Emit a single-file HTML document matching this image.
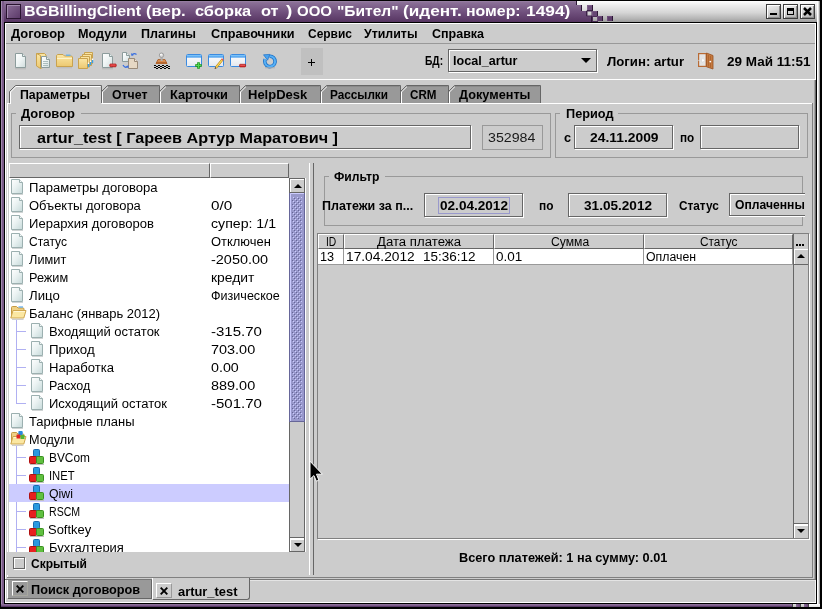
<!DOCTYPE html>
<html><head><meta charset="utf-8"><title>BGBillingClient</title>
<style>
html,body{margin:0;padding:0;}
body{width:822px;height:609px;overflow:hidden;background:#ccc;position:relative;font-family:"Liberation Sans",sans-serif;}
div,span,svg{position:absolute;box-sizing:border-box;}
.t{white-space:pre;transform-origin:0 0;}
.tf{border:1px solid #666;box-shadow:inset 1px 1px 0 #fff, 1px 1px 0 #fff;}
.grp{border:1px solid #999;}
.hd{background:#ccc;border-top:1px solid #fff;border-left:1px solid #fff;border-right:1px solid #666;border-bottom:1px solid #666;}

</style></head><body>
<div style="left:0px;top:0px;width:822px;height:23px;background:#000;"></div>
<div style="left:1px;top:1px;width:560px;height:21px;background:linear-gradient(#9a82a6 0,#8a6f96 8%,#6f4f7c 55%,#573562 100%);"></div>
<div style="left:561px;top:1px;width:256px;height:21px;background:linear-gradient(#ffffff 0,#ededed 20%,#d6d6d6 55%,#b4b4b4 85%,#9c9c9c 100%);"></div>
<svg style="left:560px;top:1px" width="60" height="21" viewBox="0 0 60 21"><defs><linearGradient id="pg" x1="0" y1="0" x2="0" y2="1"><stop offset="0" stop-color="#9a82a6"/><stop offset="0.08" stop-color="#8a6f96"/><stop offset="0.55" stop-color="#6f4f7c"/><stop offset="1" stop-color="#573562"/></linearGradient></defs><path d="M0 0H17V4H22V10H27V15H32V21H0Z" fill="#2d1836"/><path d="M0 0H16V4H21V10H26V15H31V21H0Z" fill="url(#pg)"/><rect x="27" y="4" width="6" height="6" fill="#2d1836"/><rect x="27" y="4" width="5" height="5" fill="#7d5f8a"/><rect x="28" y="5" width="4" height="4" fill="#6d4d7a"/><rect x="27" y="10" width="5" height="5" fill="none" stroke="#4a2d56"/><rect x="32" y="10" width="6" height="6" fill="#2d1836"/><rect x="32" y="10" width="5" height="5" fill="#75567f"/><rect x="33" y="11" width="4" height="4" fill="#654672"/><rect x="32.5" y="15.5" width="5" height="5" fill="none" stroke="#4a2d56"/><rect x="37" y="15" width="6" height="5" fill="#2d1836"/><rect x="37" y="15" width="5" height="5" fill="#6d4d7a"/><rect x="38" y="16" width="4" height="4" fill="#5d3d6a"/><rect x="47" y="15" width="6" height="5" fill="#2d1836"/><rect x="47" y="15" width="5" height="5" fill="#6d4d7a"/><rect x="48" y="16" width="4" height="4" fill="#5d3d6a"/></svg>
<div style="left:6px;top:4px;width:15px;height:15px;background:linear-gradient(135deg,#8a6c96,#5c3a69);border:1px solid #2a1430;box-shadow:inset 1px 1px 0 #a48db0;"></div>
<div style="left:766px;top:4px;width:15px;height:15px;background:linear-gradient(160deg,#f2f2f2 0,#d4d4d4 50%,#a8a8a8 100%);border:1px solid #3c3c3c;box-shadow:inset 1px 1px 0 #fff, inset -1px -1px 0 #8c8c8c;"></div>
<div style="left:783px;top:4px;width:15px;height:15px;background:linear-gradient(160deg,#f2f2f2 0,#d4d4d4 50%,#a8a8a8 100%);border:1px solid #3c3c3c;box-shadow:inset 1px 1px 0 #fff, inset -1px -1px 0 #8c8c8c;"></div>
<div style="left:800px;top:4px;width:15px;height:15px;background:linear-gradient(160deg,#f2f2f2 0,#d4d4d4 50%,#a8a8a8 100%);border:1px solid #3c3c3c;box-shadow:inset 1px 1px 0 #fff, inset -1px -1px 0 #8c8c8c;"></div>
<div style="left:770px;top:13px;width:7px;height:2px;background:#000;"></div>
<div style="left:787px;top:8px;width:7px;height:7px;border:1px solid #000;border-top:3px solid #000;"></div>
<svg style="left:803px;top:7px" width="9" height="9" viewBox="0 0 9 9"><path d="M1 1L8 8M8 1L1 8" stroke="#000" stroke-width="2.5"/></svg>
<div style="left:0px;top:0px;width:1px;height:609px;background:#000;"></div>
<div style="left:1px;top:1px;width:1px;height:606px;background:#a48db0;"></div>
<div style="left:2px;top:1px;width:2px;height:606px;background:#7a5a88;"></div>
<div style="left:4px;top:22px;width:1px;height:582px;background:#000;"></div>
<div style="left:5px;top:23px;width:1px;height:580px;background:#fff;"></div>
<div style="left:815px;top:23px;width:1px;height:57px;background:#fff;"></div>
<div style="left:815px;top:580px;width:1px;height:23px;background:#f0f0f0;"></div>
<div style="left:814px;top:80px;width:1px;height:500px;background:#a4a4a4;"></div>
<div style="left:815px;top:80px;width:1px;height:500px;background:#6a6a6a;"></div>
<div style="left:816px;top:22px;width:1px;height:582px;background:#000;"></div>
<div style="left:817px;top:1px;width:1px;height:606px;background:#fff;"></div>
<div style="left:818px;top:1px;width:1px;height:606px;background:#e0e0e0;"></div>
<div style="left:819px;top:1px;width:1px;height:606px;background:#a0a0a0;"></div>
<div style="left:820px;top:0px;width:2px;height:609px;background:#000;"></div>
<div style="left:5px;top:602px;width:811px;height:1px;background:#fff;"></div>
<div style="left:4px;top:603px;width:813px;height:1px;background:#000;"></div>
<div style="left:1px;top:604px;width:791px;height:1px;background:#8a6c96;"></div>
<div style="left:1px;top:605px;width:791px;height:1px;background:#7a5a88;"></div>
<div style="left:1px;top:606px;width:791px;height:1px;background:#5a3a68;"></div>
<div style="left:0px;top:607px;width:822px;height:2px;background:#000;"></div>
<div style="left:792px;top:604px;width:17px;height:3px;background:linear-gradient(#e4e4e4,#b8b8b8);"></div>
<div style="left:809px;top:604px;width:11px;height:3px;background:linear-gradient(#fff,#e0e0e0);"></div>
<div style="left:796px;top:604px;width:4px;height:3px;background:linear-gradient(90deg,#8a6c96,#6a4a78);"></div>
<div style="left:804px;top:604px;width:4px;height:3px;background:linear-gradient(90deg,#8a6c96,#6a4a78);"></div>
<div style="left:792px;top:604px;width:1px;height:3px;background:#444;"></div>
<div style="left:800px;top:604px;width:1px;height:3px;background:#444;"></div>
<div style="left:808px;top:604px;width:1px;height:3px;background:#444;"></div>
<div style="left:5px;top:23px;width:811px;height:1px;background:#fff;"></div>
<div style="left:6px;top:43px;width:809px;height:1px;background:#999;"></div>
<div style="left:6px;top:79px;width:809px;height:1px;background:#fff;"></div>
<div style="left:301px;top:48px;width:22px;height:27px;background:#c0c0c0;"></div>
<div style="left:308px;top:62px;width:7px;height:1px;background:#000;"></div>
<div style="left:311px;top:59px;width:1px;height:7px;background:#000;"></div>
<div style="left:448px;top:49px;width:149px;height:23px;border:1px solid #666;box-shadow:inset 1px 1px 0 #fff, 1px 1px 0 #fff;"></div>
<svg style="left:581px;top:58px" width="10" height="5" viewBox="0 0 10 5"><path d="M0 0H10L5 5Z" fill="#000"/></svg>
<div style="left:7px;top:103px;width:806px;height:1px;background:#fff;"></div>
<div style="left:7px;top:103px;width:1px;height:475px;background:#fff;"></div>
<div style="left:812px;top:103px;width:1px;height:475px;background:#808080;"></div>
<div style="left:7px;top:577px;width:806px;height:1px;background:#808080;"></div>
<svg style="left:448px;top:85px" width="93" height="18" viewBox="0 0 93 18"><path d="M0.5 18 V6.5 L6.5 0.5 H92.5 V18 Z" fill="#999" stroke="none"/><path d="M0.5 18 V6.5 L6.5 0.5 H92.5 V18" fill="none" stroke="#666" stroke-width="1"/><path d="M1.5 18 V7 L7 1.5" fill="none" stroke="#fff" stroke-width="1"/><path d="M7 1.5 H91.5" fill="none" stroke="#8a8a8a" stroke-width="1"/></svg>
<svg style="left:400px;top:85px" width="49" height="18" viewBox="0 0 49 18"><path d="M0.5 18 V6.5 L6.5 0.5 H48.5 V18 Z" fill="#999" stroke="none"/><path d="M0.5 18 V6.5 L6.5 0.5 H48.5 V18" fill="none" stroke="#666" stroke-width="1"/><path d="M1.5 18 V7 L7 1.5" fill="none" stroke="#fff" stroke-width="1"/><path d="M7 1.5 H47.5" fill="none" stroke="#8a8a8a" stroke-width="1"/></svg>
<svg style="left:320px;top:85px" width="81" height="18" viewBox="0 0 81 18"><path d="M0.5 18 V6.5 L6.5 0.5 H80.5 V18 Z" fill="#999" stroke="none"/><path d="M0.5 18 V6.5 L6.5 0.5 H80.5 V18" fill="none" stroke="#666" stroke-width="1"/><path d="M1.5 18 V7 L7 1.5" fill="none" stroke="#fff" stroke-width="1"/><path d="M7 1.5 H79.5" fill="none" stroke="#8a8a8a" stroke-width="1"/></svg>
<svg style="left:239px;top:85px" width="82" height="18" viewBox="0 0 82 18"><path d="M0.5 18 V6.5 L6.5 0.5 H81.5 V18 Z" fill="#999" stroke="none"/><path d="M0.5 18 V6.5 L6.5 0.5 H81.5 V18" fill="none" stroke="#666" stroke-width="1"/><path d="M1.5 18 V7 L7 1.5" fill="none" stroke="#fff" stroke-width="1"/><path d="M7 1.5 H80.5" fill="none" stroke="#8a8a8a" stroke-width="1"/></svg>
<svg style="left:159px;top:85px" width="81" height="18" viewBox="0 0 81 18"><path d="M0.5 18 V6.5 L6.5 0.5 H80.5 V18 Z" fill="#999" stroke="none"/><path d="M0.5 18 V6.5 L6.5 0.5 H80.5 V18" fill="none" stroke="#666" stroke-width="1"/><path d="M1.5 18 V7 L7 1.5" fill="none" stroke="#fff" stroke-width="1"/><path d="M7 1.5 H79.5" fill="none" stroke="#8a8a8a" stroke-width="1"/></svg>
<svg style="left:101px;top:85px" width="59" height="18" viewBox="0 0 59 18"><path d="M0.5 18 V6.5 L6.5 0.5 H58.5 V18 Z" fill="#999" stroke="none"/><path d="M0.5 18 V6.5 L6.5 0.5 H58.5 V18" fill="none" stroke="#666" stroke-width="1"/><path d="M1.5 18 V7 L7 1.5" fill="none" stroke="#fff" stroke-width="1"/><path d="M7 1.5 H57.5" fill="none" stroke="#8a8a8a" stroke-width="1"/></svg>
<svg style="left:9px;top:85px" width="93" height="19" viewBox="0 0 93 19"><path d="M0.5 19 V6.5 L6.5 0.5 H92.5 V19 Z" fill="#ccc" stroke="none"/><path d="M0.5 18 V6.5 L6.5 0.5 H92.5 V18" fill="none" stroke="#666" stroke-width="1"/><path d="M1.5 19 V7 L7 1.5" fill="none" stroke="#fff" stroke-width="1"/><path d="M7 1.5 H91.5" fill="none" stroke="#fff" stroke-width="1"/></svg>
<div class="grp" style="left:11px;top:113px;width:540px;height:45px;"></div>
<div style="left:16px;top:106px;width:65px;height:14px;background:#ccc;"></div>
<div class="tf" style="left:19px;top:125px;width:452px;height:24px;"></div>
<div style="left:482px;top:125px;width:61px;height:25px;border:1px solid #999;"></div>
<div class="grp" style="left:555px;top:113px;width:253px;height:45px;"></div>
<div style="left:560px;top:106px;width:58px;height:14px;background:#ccc;"></div>
<div class="tf" style="left:574px;top:125px;width:99px;height:24px;"></div>
<div class="tf" style="left:700px;top:125px;width:99px;height:24px;"></div>
<div style="left:309px;top:163px;width:1px;height:412px;background:#fff;"></div>
<div style="left:313px;top:163px;width:1px;height:412px;background:#666;"></div>
<div class="hd" style="left:9px;top:163px;width:201px;height:15px;"></div>
<div class="hd" style="left:210px;top:163px;width:79px;height:15px;"></div>
<div style="left:9px;top:178px;width:280px;height:374px;background:#fff;"></div>
<div style="left:289px;top:178px;width:16px;height:374px;background:#ccc;border:1px solid #666;"></div>
<div style="left:305px;top:178px;width:1px;height:374px;background:#fff;"></div>
<div style="left:290px;top:179px;width:14px;height:14px;background:#ccc;border-bottom:1px solid #666;box-shadow:inset 1px 1px 0 #fff;"></div>
<svg style="left:294px;top:184px" width="8" height="4" viewBox="0 0 8 4"><path d="M0 4H8L4 0Z" fill="#000"/></svg>
<div style="left:290px;top:537px;width:14px;height:14px;background:#ccc;border-top:1px solid #666;box-shadow:inset 1px 2px 0 #fff;"></div>
<svg style="left:294px;top:543px" width="8" height="4" viewBox="0 0 8 4"><path d="M0 0H8L4 4Z" fill="#000"/></svg>
<svg style="left:289px;top:193px" width="16" height="229" viewBox="0 0 16 229"><defs><pattern id="bm" width="4" height="4" patternUnits="userSpaceOnUse"><rect width="4" height="4" fill="#9999cc"/><rect x="0" y="0" width="1" height="1" fill="#ccccff"/><rect x="1" y="1" width="1" height="1" fill="#666699"/><rect x="2" y="2" width="1" height="1" fill="#ccccff"/><rect x="3" y="3" width="1" height="1" fill="#666699"/></pattern></defs><rect width="16" height="229" fill="#9999cc"/><rect x="3" y="4" width="10" height="222" fill="url(#bm)"/><path d="M1.5 228V0.5H15" stroke="#ccccff" fill="none"/><path d="M0 228.5H16M15.5 0V229M0.5 0V229" stroke="#666699" fill="none"/></svg>
<div style="left:16px;top:320px;width:1px;height:84px;background:#b0b0f2;"></div>
<div style="left:16px;top:331px;width:10px;height:1px;background:#b0b0f2;"></div>
<div style="left:16px;top:349px;width:10px;height:1px;background:#b0b0f2;"></div>
<div style="left:16px;top:367px;width:10px;height:1px;background:#b0b0f2;"></div>
<div style="left:16px;top:385px;width:10px;height:1px;background:#b0b0f2;"></div>
<div style="left:16px;top:403px;width:10px;height:1px;background:#b0b0f2;"></div>
<div style="left:16px;top:446px;width:1px;height:106px;background:#b0b0f2;"></div>
<div style="left:16px;top:457px;width:10px;height:1px;background:#b0b0f2;"></div>
<div style="left:16px;top:475px;width:10px;height:1px;background:#b0b0f2;"></div>
<div style="left:16px;top:511px;width:10px;height:1px;background:#b0b0f2;"></div>
<div style="left:16px;top:529px;width:10px;height:1px;background:#b0b0f2;"></div>
<div style="left:16px;top:547px;width:10px;height:1px;background:#b0b0f2;"></div>
<div style="left:9px;top:484px;width:280px;height:18px;background:#ccccff;"></div>
<svg style="left:11px;top:179px" width="13" height="17" viewBox="0 0 13 17"><defs><linearGradient id="dg1" x1="0" y1="0" x2="1" y2="1"><stop offset="0" stop-color="#ffffff"/><stop offset="0.45" stop-color="#eaf2f2"/><stop offset="1" stop-color="#c6d9d9"/></linearGradient></defs><path d="M0.5 0.5H8.5L11.5 3.5V14.5H0.5Z" fill="url(#dg1)" stroke="#9cb0b0" stroke-width="1"/><path d="M8.5 0.5V3.5H11.5" fill="#f4f8f8" stroke="#9cb0b0" stroke-width="1"/><path d="M1 15.5H12" stroke="#d0d4d4" stroke-width="1"/></svg>
<svg style="left:11px;top:197px" width="13" height="17" viewBox="0 0 13 17"><defs><linearGradient id="dg2" x1="0" y1="0" x2="1" y2="1"><stop offset="0" stop-color="#ffffff"/><stop offset="0.45" stop-color="#eaf2f2"/><stop offset="1" stop-color="#c6d9d9"/></linearGradient></defs><path d="M0.5 0.5H8.5L11.5 3.5V14.5H0.5Z" fill="url(#dg2)" stroke="#9cb0b0" stroke-width="1"/><path d="M8.5 0.5V3.5H11.5" fill="#f4f8f8" stroke="#9cb0b0" stroke-width="1"/><path d="M1 15.5H12" stroke="#d0d4d4" stroke-width="1"/></svg>
<svg style="left:11px;top:215px" width="13" height="17" viewBox="0 0 13 17"><defs><linearGradient id="dg3" x1="0" y1="0" x2="1" y2="1"><stop offset="0" stop-color="#ffffff"/><stop offset="0.45" stop-color="#eaf2f2"/><stop offset="1" stop-color="#c6d9d9"/></linearGradient></defs><path d="M0.5 0.5H8.5L11.5 3.5V14.5H0.5Z" fill="url(#dg3)" stroke="#9cb0b0" stroke-width="1"/><path d="M8.5 0.5V3.5H11.5" fill="#f4f8f8" stroke="#9cb0b0" stroke-width="1"/><path d="M1 15.5H12" stroke="#d0d4d4" stroke-width="1"/></svg>
<svg style="left:11px;top:233px" width="13" height="17" viewBox="0 0 13 17"><defs><linearGradient id="dg4" x1="0" y1="0" x2="1" y2="1"><stop offset="0" stop-color="#ffffff"/><stop offset="0.45" stop-color="#eaf2f2"/><stop offset="1" stop-color="#c6d9d9"/></linearGradient></defs><path d="M0.5 0.5H8.5L11.5 3.5V14.5H0.5Z" fill="url(#dg4)" stroke="#9cb0b0" stroke-width="1"/><path d="M8.5 0.5V3.5H11.5" fill="#f4f8f8" stroke="#9cb0b0" stroke-width="1"/><path d="M1 15.5H12" stroke="#d0d4d4" stroke-width="1"/></svg>
<svg style="left:11px;top:251px" width="13" height="17" viewBox="0 0 13 17"><defs><linearGradient id="dg5" x1="0" y1="0" x2="1" y2="1"><stop offset="0" stop-color="#ffffff"/><stop offset="0.45" stop-color="#eaf2f2"/><stop offset="1" stop-color="#c6d9d9"/></linearGradient></defs><path d="M0.5 0.5H8.5L11.5 3.5V14.5H0.5Z" fill="url(#dg5)" stroke="#9cb0b0" stroke-width="1"/><path d="M8.5 0.5V3.5H11.5" fill="#f4f8f8" stroke="#9cb0b0" stroke-width="1"/><path d="M1 15.5H12" stroke="#d0d4d4" stroke-width="1"/></svg>
<svg style="left:11px;top:269px" width="13" height="17" viewBox="0 0 13 17"><defs><linearGradient id="dg6" x1="0" y1="0" x2="1" y2="1"><stop offset="0" stop-color="#ffffff"/><stop offset="0.45" stop-color="#eaf2f2"/><stop offset="1" stop-color="#c6d9d9"/></linearGradient></defs><path d="M0.5 0.5H8.5L11.5 3.5V14.5H0.5Z" fill="url(#dg6)" stroke="#9cb0b0" stroke-width="1"/><path d="M8.5 0.5V3.5H11.5" fill="#f4f8f8" stroke="#9cb0b0" stroke-width="1"/><path d="M1 15.5H12" stroke="#d0d4d4" stroke-width="1"/></svg>
<svg style="left:11px;top:287px" width="13" height="17" viewBox="0 0 13 17"><defs><linearGradient id="dg7" x1="0" y1="0" x2="1" y2="1"><stop offset="0" stop-color="#ffffff"/><stop offset="0.45" stop-color="#eaf2f2"/><stop offset="1" stop-color="#c6d9d9"/></linearGradient></defs><path d="M0.5 0.5H8.5L11.5 3.5V14.5H0.5Z" fill="url(#dg7)" stroke="#9cb0b0" stroke-width="1"/><path d="M8.5 0.5V3.5H11.5" fill="#f4f8f8" stroke="#9cb0b0" stroke-width="1"/><path d="M1 15.5H12" stroke="#d0d4d4" stroke-width="1"/></svg>
<svg style="left:10px;top:305px" width="17" height="15" viewBox="0 0 17 15"><path d="M1.5 12.5V2.5Q1.5 1.5 2.5 1.5H6.5L8 3H13Q14 3 14 4V6" fill="#efd084" stroke="#c49a44" stroke-width="1"/><path d="M8.5 2H13" stroke="#58a8ec" stroke-width="1.2"/><path d="M0.8 13L3 5.5H16L13.8 13Z" fill="#fbe7a2" stroke="#cfa64e" stroke-width="1"/><path d="M3.6 6.5H15" stroke="#fff6d4" stroke-width="1"/><path d="M2 14.3H13.5" stroke="#c4c4c4"/></svg>
<svg style="left:31px;top:323px" width="13" height="17" viewBox="0 0 13 17"><defs><linearGradient id="dg8" x1="0" y1="0" x2="1" y2="1"><stop offset="0" stop-color="#ffffff"/><stop offset="0.45" stop-color="#eaf2f2"/><stop offset="1" stop-color="#c6d9d9"/></linearGradient></defs><path d="M0.5 0.5H8.5L11.5 3.5V14.5H0.5Z" fill="url(#dg8)" stroke="#9cb0b0" stroke-width="1"/><path d="M8.5 0.5V3.5H11.5" fill="#f4f8f8" stroke="#9cb0b0" stroke-width="1"/><path d="M1 15.5H12" stroke="#d0d4d4" stroke-width="1"/></svg>
<svg style="left:31px;top:341px" width="13" height="17" viewBox="0 0 13 17"><defs><linearGradient id="dg9" x1="0" y1="0" x2="1" y2="1"><stop offset="0" stop-color="#ffffff"/><stop offset="0.45" stop-color="#eaf2f2"/><stop offset="1" stop-color="#c6d9d9"/></linearGradient></defs><path d="M0.5 0.5H8.5L11.5 3.5V14.5H0.5Z" fill="url(#dg9)" stroke="#9cb0b0" stroke-width="1"/><path d="M8.5 0.5V3.5H11.5" fill="#f4f8f8" stroke="#9cb0b0" stroke-width="1"/><path d="M1 15.5H12" stroke="#d0d4d4" stroke-width="1"/></svg>
<svg style="left:31px;top:359px" width="13" height="17" viewBox="0 0 13 17"><defs><linearGradient id="dg10" x1="0" y1="0" x2="1" y2="1"><stop offset="0" stop-color="#ffffff"/><stop offset="0.45" stop-color="#eaf2f2"/><stop offset="1" stop-color="#c6d9d9"/></linearGradient></defs><path d="M0.5 0.5H8.5L11.5 3.5V14.5H0.5Z" fill="url(#dg10)" stroke="#9cb0b0" stroke-width="1"/><path d="M8.5 0.5V3.5H11.5" fill="#f4f8f8" stroke="#9cb0b0" stroke-width="1"/><path d="M1 15.5H12" stroke="#d0d4d4" stroke-width="1"/></svg>
<svg style="left:31px;top:377px" width="13" height="17" viewBox="0 0 13 17"><defs><linearGradient id="dg11" x1="0" y1="0" x2="1" y2="1"><stop offset="0" stop-color="#ffffff"/><stop offset="0.45" stop-color="#eaf2f2"/><stop offset="1" stop-color="#c6d9d9"/></linearGradient></defs><path d="M0.5 0.5H8.5L11.5 3.5V14.5H0.5Z" fill="url(#dg11)" stroke="#9cb0b0" stroke-width="1"/><path d="M8.5 0.5V3.5H11.5" fill="#f4f8f8" stroke="#9cb0b0" stroke-width="1"/><path d="M1 15.5H12" stroke="#d0d4d4" stroke-width="1"/></svg>
<svg style="left:31px;top:395px" width="13" height="17" viewBox="0 0 13 17"><defs><linearGradient id="dg12" x1="0" y1="0" x2="1" y2="1"><stop offset="0" stop-color="#ffffff"/><stop offset="0.45" stop-color="#eaf2f2"/><stop offset="1" stop-color="#c6d9d9"/></linearGradient></defs><path d="M0.5 0.5H8.5L11.5 3.5V14.5H0.5Z" fill="url(#dg12)" stroke="#9cb0b0" stroke-width="1"/><path d="M8.5 0.5V3.5H11.5" fill="#f4f8f8" stroke="#9cb0b0" stroke-width="1"/><path d="M1 15.5H12" stroke="#d0d4d4" stroke-width="1"/></svg>
<svg style="left:11px;top:413px" width="13" height="17" viewBox="0 0 13 17"><defs><linearGradient id="dg13" x1="0" y1="0" x2="1" y2="1"><stop offset="0" stop-color="#ffffff"/><stop offset="0.45" stop-color="#eaf2f2"/><stop offset="1" stop-color="#c6d9d9"/></linearGradient></defs><path d="M0.5 0.5H8.5L11.5 3.5V14.5H0.5Z" fill="url(#dg13)" stroke="#9cb0b0" stroke-width="1"/><path d="M8.5 0.5V3.5H11.5" fill="#f4f8f8" stroke="#9cb0b0" stroke-width="1"/><path d="M1 15.5H12" stroke="#d0d4d4" stroke-width="1"/></svg>
<svg style="left:10px;top:431px" width="17" height="15" viewBox="0 0 17 15"><path d="M1.5 12.5V2.5Q1.5 1.5 2.5 1.5H6.5L8 3H13Q14 3 14 4V6" fill="#efd084" stroke="#c49a44" stroke-width="1"/><path d="M8.5 2H13" stroke="#58a8ec" stroke-width="1.2"/><path d="M0.8 13L3 5.5H16L13.8 13Z" fill="#fbe7a2" stroke="#cfa64e" stroke-width="1"/><path d="M3.6 6.5H15" stroke="#fff6d4" stroke-width="1"/><path d="M2 14.3H13.5" stroke="#c4c4c4"/><rect x="8.5" y="0" width="4" height="4.5" rx="0.6" fill="#2a8ade"/><rect x="6.5" y="3.5" width="4" height="4" rx="0.6" fill="#e02424"/><rect x="10.5" y="4" width="4" height="4" rx="0.6" fill="#54b434"/></svg>
<svg style="left:29px;top:449px" width="16" height="16" viewBox="0 0 16 16"><rect x="4.5" y="0.5" width="6" height="7" rx="1" fill="#2a9ae0" stroke="#1a6ab0"/><rect x="0.5" y="7.5" width="7" height="7" rx="1" fill="#e82020" stroke="#b01010"/><rect x="7.5" y="7.5" width="7" height="7" rx="1" fill="#60c040" stroke="#3a9020"/><path d="M1 15.5H15" stroke="#c0c0c0"/></svg>
<svg style="left:29px;top:467px" width="16" height="16" viewBox="0 0 16 16"><rect x="4.5" y="0.5" width="6" height="7" rx="1" fill="#2a9ae0" stroke="#1a6ab0"/><rect x="0.5" y="7.5" width="7" height="7" rx="1" fill="#e82020" stroke="#b01010"/><rect x="7.5" y="7.5" width="7" height="7" rx="1" fill="#60c040" stroke="#3a9020"/><path d="M1 15.5H15" stroke="#c0c0c0"/></svg>
<svg style="left:29px;top:485px" width="16" height="16" viewBox="0 0 16 16"><rect x="4.5" y="0.5" width="6" height="7" rx="1" fill="#2a9ae0" stroke="#1a6ab0"/><rect x="0.5" y="7.5" width="7" height="7" rx="1" fill="#e82020" stroke="#b01010"/><rect x="7.5" y="7.5" width="7" height="7" rx="1" fill="#60c040" stroke="#3a9020"/><path d="M1 15.5H15" stroke="#c0c0c0"/></svg>
<svg style="left:29px;top:503px" width="16" height="16" viewBox="0 0 16 16"><rect x="4.5" y="0.5" width="6" height="7" rx="1" fill="#2a9ae0" stroke="#1a6ab0"/><rect x="0.5" y="7.5" width="7" height="7" rx="1" fill="#e82020" stroke="#b01010"/><rect x="7.5" y="7.5" width="7" height="7" rx="1" fill="#60c040" stroke="#3a9020"/><path d="M1 15.5H15" stroke="#c0c0c0"/></svg>
<svg style="left:29px;top:521px" width="16" height="16" viewBox="0 0 16 16"><rect x="4.5" y="0.5" width="6" height="7" rx="1" fill="#2a9ae0" stroke="#1a6ab0"/><rect x="0.5" y="7.5" width="7" height="7" rx="1" fill="#e82020" stroke="#b01010"/><rect x="7.5" y="7.5" width="7" height="7" rx="1" fill="#60c040" stroke="#3a9020"/><path d="M1 15.5H15" stroke="#c0c0c0"/></svg>
<svg style="left:29px;top:539px" width="16" height="16" viewBox="0 0 16 16"><rect x="4.5" y="0.5" width="6" height="7" rx="1" fill="#2a9ae0" stroke="#1a6ab0"/><rect x="0.5" y="7.5" width="7" height="7" rx="1" fill="#e82020" stroke="#b01010"/><rect x="7.5" y="7.5" width="7" height="7" rx="1" fill="#60c040" stroke="#3a9020"/><path d="M1 15.5H15" stroke="#c0c0c0"/></svg>
<div style="left:6px;top:552px;width:303px;height:23px;background:#ccc;"></div>
<div style="left:9px;top:552px;width:297px;height:1px;background:#ccc;"></div>
<div style="left:13px;top:557px;width:12px;height:12px;border:1px solid #666;box-shadow:inset 1px 1px 0 #fff, 1px 1px 0 #fff;"></div>
<div class="grp" style="left:324px;top:176px;width:479px;height:50px;"></div>
<div style="left:329px;top:170px;width:56px;height:14px;background:#ccc;"></div>
<div style="left:318px;top:190px;width:10px;height:30px;background:#ccc;"></div>
<div style="left:324px;top:190px;width:1px;height:30px;background:#999;"></div>
<div class="tf" style="left:424px;top:193px;width:99px;height:24px;"></div>
<div style="left:438px;top:197px;width:72px;height:17px;border:1px solid #9999cc;"></div>
<div class="tf" style="left:568px;top:193px;width:99px;height:24px;"></div>
<div style="left:729px;top:193px;width:76px;height:23px;background:#ccc;border:1px solid #666;border-right:none;box-shadow:inset 1px 1px 0 #fff, 0 1px 0 #fff;overflow:hidden;"></div>
<div style="left:317px;top:233px;width:492px;height:306px;border:1px solid #808080;box-shadow:1px 1px 0 #fff;"></div>
<div class="hd" style="left:318px;top:234px;width:26px;height:15px;"></div>
<div class="hd" style="left:344px;top:234px;width:150px;height:15px;"></div>
<div class="hd" style="left:494px;top:234px;width:150px;height:15px;"></div>
<div class="hd" style="left:644px;top:234px;width:149px;height:15px;"></div>
<div style="left:793px;top:234px;width:1px;height:15px;background:#666;"></div>
<div style="left:796px;top:244px;width:2px;height:2px;background:#000;"></div>
<div style="left:799px;top:244px;width:2px;height:2px;background:#000;"></div>
<div style="left:802px;top:244px;width:2px;height:2px;background:#000;"></div>
<div style="left:318px;top:249px;width:475px;height:15px;background:#fff;"></div>
<div style="left:343px;top:249px;width:1px;height:16px;background:#999;"></div>
<div style="left:493px;top:249px;width:1px;height:16px;background:#999;"></div>
<div style="left:643px;top:249px;width:1px;height:16px;background:#999;"></div>
<div style="left:318px;top:264px;width:475px;height:1px;background:#999;"></div>
<div style="left:792px;top:249px;width:1px;height:16px;background:#999;"></div>
<div style="left:793px;top:249px;width:15px;height:289px;background:#ccc;border-left:1px solid #666;"></div>
<div style="left:794px;top:249px;width:14px;height:16px;background:#ccc;border-bottom:1px solid #666;box-shadow:inset 1px 1px 0 #fff;"></div>
<svg style="left:797px;top:254px" width="8" height="4" viewBox="0 0 8 4"><path d="M0 4H8L4 0Z" fill="#000"/></svg>
<div style="left:794px;top:523px;width:14px;height:15px;background:#ccc;border-top:1px solid #666;box-shadow:inset 1px 2px 0 #fff;"></div>
<svg style="left:797px;top:529px" width="8" height="4" viewBox="0 0 8 4"><path d="M0 0H8L4 4Z" fill="#000"/></svg>
<div style="left:5px;top:579px;width:147px;height:1px;background:#777;"></div>
<div style="left:249px;top:579px;width:566px;height:1px;background:#777;"></div>
<div style="left:250px;top:580px;width:565px;height:1px;background:#e4e4e4;"></div>
<div style="left:7px;top:580px;width:1px;height:18px;background:#fff;"></div>
<div style="left:8px;top:580px;width:143px;height:18px;background:#999;"></div>
<div style="left:8px;top:598px;width:143px;height:1px;background:#666;"></div>
<div style="left:151px;top:580px;width:1px;height:19px;background:#666;"></div>
<div style="left:12px;top:581px;width:16px;height:15px;background:#999;border-top:1px solid #fff;border-left:1px solid #fff;border-right:1px solid #a8a8a0;border-bottom:1px solid #a8a8a0;"></div>
<svg style="left:16px;top:585px" width="8" height="8" viewBox="0 0 8 8"><path d="M0.7 0.7L7.3 7.3M7.3 0.7L0.7 7.3" stroke="#000" stroke-width="1.9"/></svg>
<div style="left:152px;top:578px;width:98px;height:22px;background:#ccc;border-left:1px solid #fff;border-right:1px solid #666;border-bottom:1px solid #666;border-radius:0 0 3px 0;"></div>
<div style="left:156px;top:583px;width:16px;height:15px;background:#ccc;border-top:1px solid #fff;border-left:1px solid #fff;border-right:1px solid #999;border-bottom:1px solid #999;"></div>
<svg style="left:160px;top:587px" width="8" height="8" viewBox="0 0 8 8"><path d="M0.7 0.7L7.3 7.3M7.3 0.7L0.7 7.3" stroke="#000" stroke-width="1.9"/></svg>
<svg style="left:309px;top:460px" width="15" height="23" viewBox="0 0 15 23"><path d="M1 1.2V19.2L4.9 15.6L7.4 21.2L9.9 20.2L7.5 14.2H13.4Z" fill="#000" stroke="#fff" stroke-width="1" stroke-linejoin="miter"/></svg>
<svg style="left:0px;top:0px" width="1" height="1" viewBox="0 0 1 1"><defs><linearGradient id="pgd" x1="0" y1="0" x2="1" y2="1"><stop offset="0" stop-color="#fff"/><stop offset="0.5" stop-color="#eef4f4"/><stop offset="1" stop-color="#cfdcdc"/></linearGradient><linearGradient id="fgd" x1="0" y1="0" x2="0" y2="1"><stop offset="0" stop-color="#fbe7a6"/><stop offset="1" stop-color="#ecc870"/></linearGradient><linearGradient id="wgd" x1="0" y1="0" x2="0" y2="1"><stop offset="0" stop-color="#fff"/><stop offset="1" stop-color="#e4e8ee"/></linearGradient><linearGradient id="bgd" x1="0" y1="0" x2="0" y2="1"><stop offset="0" stop-color="#8accfa"/><stop offset="1" stop-color="#3a94ea"/></linearGradient></defs></svg>
<svg style="left:14px;top:52px" width="13" height="18" viewBox="0 0 13 18"><path d="M1.5 1.5H8.5L11.5 4.5V15.5H1.5Z" fill="url(#pgd)" stroke="#8c9c9c"/><path d="M8.5 1.5V4.5H11.5" fill="#e6eeee" stroke="#8c9c9c"/><path d="M1 16.8H12" stroke="#b4b4b4"/></svg>
<svg style="left:35px;top:52px" width="17" height="18" viewBox="0 0 17 18"><path d="M1.5 1.5H9.5L11 3V14L5.5 16.5L1.5 14Z" fill="url(#fgd)" stroke="#c9a24e"/><path d="M1.5 1.5L5.5 3.5V16.5" fill="none" stroke="#c9a24e"/><path d="M6.5 4.5H11.5L14.5 7.5V15.5H6.5Z" fill="url(#pgd)" stroke="#8c9c9c"/><path d="M11.5 4.5V7.5H14.5" fill="#e6eeee" stroke="#8c9c9c"/><path d="M8 9.5H13M8 11.5H13M8 13.5H13" stroke="#9ab0b0" stroke-width="0.8"/></svg>
<svg style="left:55px;top:53px" width="19" height="16" viewBox="0 0 19 16"><path d="M1.5 13.5V3Q1.5 2 2.5 1.5H8L9.5 3H16Q17 3 17.5 4V13.5Z" fill="url(#fgd)" stroke="#c9a24e"/><path d="M11 2.2H15.5" stroke="#5ab0ee" stroke-width="1.2"/><path d="M2 5.5H17" stroke="#fdf3cc"/><path d="M2 14.8H17" stroke="#b8b8b8"/></svg>
<svg style="left:78px;top:52px" width="17" height="18" viewBox="0 0 17 18"><path d="M6.5 0.5H14.5V11.5H6.5Z" fill="url(#fgd)" stroke="#c9a24e"/><path d="M4.5 2.5H13.5V13.5H4.5Z" fill="url(#fgd)" stroke="#c9a24e"/><path d="M2.5 4.5H11.5V15H2.5Z" fill="url(#fgd)" stroke="#c9a24e"/><path d="M0.5 6.5H9.5V16.5H0.5Z" fill="url(#fgd)" stroke="#c9a24e"/><path d="M10.5 12V15M12.5 10V13M14.5 8V11" stroke="#3aa0e8" stroke-width="1.4"/><path d="M10.5 10.5V12M12.5 8.5V10M14.5 6.5V8" stroke="#fff" stroke-width="1.4"/></svg>
<svg style="left:101px;top:52px" width="16" height="18" viewBox="0 0 16 18"><path d="M1.5 1.5H8.5L11.5 4.5V15.5H1.5Z" fill="url(#pgd)" stroke="#8c9c9c"/><path d="M8.5 1.5V4.5H11.5" fill="#e6eeee" stroke="#8c9c9c"/><path d="M1 16.8H12" stroke="#b4b4b4"/><rect x="8.8" y="12" width="6.4" height="2.8" rx="0.8" fill="#e03030" stroke="#a01010" stroke-width="0.7"/><path d="M9.5 13H14.5" stroke="#f08080" stroke-width="0.6"/></svg>
<svg style="left:121px;top:51px" width="18" height="19" viewBox="0 0 18 19"><path d="M1.5 1.5H5.5L8.5 4.5V10.5H1.5Z" fill="url(#pgd)" stroke="#8c9c9c"/><path d="M5.5 1.5V4.5H8.5" fill="#e6eeee" stroke="#8c9c9c"/><path d="M7.5 7.5H13.5L16.5 10.5V17.5H7.5Z" fill="#e6d8c4" stroke="#9a8a78"/><path d="M13.5 7.5V10.5H16.5" fill="#f2e8da" stroke="#9a8a78"/><path d="M11 4Q13 1.5 15.5 3.5" fill="none" stroke="#3a70e0" stroke-width="1.3"/><path d="M10 2L10.5 5L13 4Z" fill="#3a70e0"/><path d="M2 14Q4 17.5 6.5 15.5" fill="none" stroke="#3a70e0" stroke-width="1.3"/><path d="M7.5 17.5L7.5 14.2L5 15.2Z" fill="#3a70e0"/></svg>
<svg style="left:153px;top:52px" width="18" height="18" viewBox="0 0 18 18"><rect x="7.6" y="4" width="2" height="4.5" fill="#b0b0b0"/><circle cx="8.5" cy="3.2" r="2.2" fill="#d8d8d8" stroke="#909090" stroke-width="0.8"/><circle cx="8" cy="2.6" r="0.9" fill="#fff"/><path d="M3 11.5L5 7.5H12L14 11.5Z" fill="#d88c50" stroke="#a45a24" stroke-width="0.8"/><rect x="7.6" y="6" width="2" height="3" fill="#b0b0b0"/><path d="M3 10.8H14" stroke="#b4642c" stroke-width="1.4"/><path d="M1 13.5H17" stroke="#000" stroke-width="1" stroke-dasharray="2 2"/><path d="M3 14.5H17" stroke="#000" stroke-width="1" stroke-dasharray="2 2"/><path d="M1 15.5H17" stroke="#000" stroke-width="1" stroke-dasharray="2 2"/><path d="M3 16.5H17" stroke="#000" stroke-width="1" stroke-dasharray="2 2"/></svg>
<svg style="left:186px;top:54px" width="18" height="15" viewBox="0 0 18 15"><rect x="0.5" y="0.5" width="15" height="12" rx="1" fill="url(#wgd)" stroke="#3a8ae0"/><rect x="1" y="1" width="14" height="2.6" fill="url(#bgd)"/><path d="M12.5 8.2V14.8M9.2 11.5H15.8" stroke="#189018" stroke-width="2.6"/><path d="M12.5 8.8V14.2M9.8 11.5H15.2" stroke="#50d850" stroke-width="1.2"/></svg>
<svg style="left:208px;top:54px" width="18" height="15" viewBox="0 0 18 15"><rect x="0.5" y="0.5" width="15" height="12" rx="1" fill="url(#wgd)" stroke="#3a8ae0"/><rect x="1" y="1" width="14" height="2.6" fill="url(#bgd)"/><path d="M8 13.5L14.5 5.5" stroke="#b87a10" stroke-width="2.4"/><path d="M8 13.5L14.5 5.5" stroke="#f8dc58" stroke-width="1.2"/><path d="M14 6.1L15 4.9" stroke="#e06060" stroke-width="2.4"/><path d="M6.6 15L8.6 14.2L7.2 13Z" fill="#403020"/></svg>
<svg style="left:230px;top:54px" width="18" height="15" viewBox="0 0 18 15"><rect x="0.5" y="0.5" width="15" height="12" rx="1" fill="url(#wgd)" stroke="#3a8ae0"/><rect x="1" y="1" width="14" height="2.6" fill="url(#bgd)"/><rect x="9.6" y="10.3" width="6" height="2.6" rx="0.7" fill="#e03030" stroke="#a01010" stroke-width="0.7"/><path d="M10.3 11.2H15" stroke="#f08080" stroke-width="0.6"/></svg>
<svg style="left:262px;top:53px" width="17" height="17" viewBox="0 0 17 17"><path d="M7.5 3.2A5.2 5.2 0 1 1 3.2 6.2" fill="none" stroke="#1a70c8" stroke-width="3.6"/><path d="M7.5 3.2A5.2 5.2 0 1 1 3.2 6.2" fill="none" stroke="#58b0f4" stroke-width="2"/><path d="M1.5 1.8L7.8 1.4L5.6 7.2Z" fill="#4aa4f0" stroke="#1a70c8" stroke-width="0.7"/><path d="M3 14.8H13" stroke="#b0b0b0"/></svg>
<svg style="left:697px;top:52px" width="17" height="18" viewBox="0 0 17 18"><rect x="1" y="1" width="8.5" height="14" fill="#b86a34"/><rect x="2.2" y="2.2" width="6.4" height="11.6" fill="#e4e4e4"/><path d="M9.5 1L16 3.5V17L9.5 14.8Z" fill="#c47a40" stroke="#9a5020" stroke-width="0.8"/><path d="M11.5 3V14.5M13.5 4V15.5" stroke="#a85c28" stroke-width="0.7"/><circle cx="13.3" cy="9.6" r="0.9" fill="#fff"/><path d="M1.5 8.2H5V6L8 8.2L5 10.6V8.8H1.5Z" fill="#fff" stroke="#d0d0d0" stroke-width="0.4"/></svg>
<div style="left:0;top:0;width:822px;height:609px;will-change:transform;">
<span class="t" style="left:23.80px;top:3.80px;font-size:14px;line-height:14px;transform:scaleX(1.1404);color:#fff;font-weight:bold;">BGBillingClient</span>
<span class="t" style="left:145.73px;top:3.80px;font-size:14px;line-height:14px;transform:scaleX(1.1920);color:#fff;font-weight:bold;">(вер.</span>
<span class="t" style="left:195.17px;top:3.80px;font-size:14px;line-height:14px;transform:scaleX(1.1663);color:#fff;font-weight:bold;">сборка</span>
<span class="t" style="left:261.05px;top:3.80px;font-size:14px;line-height:14px;transform:scaleX(1.1669);color:#fff;font-weight:bold;">от</span>
<span class="t" style="left:285.90px;top:3.80px;font-size:14px;line-height:14px;transform:scaleX(1.3555);color:#fff;font-weight:bold;">)</span>
<span class="t" style="left:296.91px;top:3.80px;font-size:14px;line-height:14px;transform:scaleX(1.0699);color:#fff;font-weight:bold;">ООО</span>
<span class="t" style="left:336.56px;top:3.80px;font-size:14px;line-height:14px;transform:scaleX(1.1090);color:#fff;font-weight:bold;">&quot;Бител&quot;</span>
<span class="t" style="left:402.80px;top:3.80px;font-size:14px;line-height:14px;transform:scaleX(1.2261);color:#fff;font-weight:bold;">(идент.</span>
<span class="t" style="left:466.30px;top:3.80px;font-size:14px;line-height:14px;transform:scaleX(1.1339);color:#fff;font-weight:bold;">номер:</span>
<span class="t" style="left:525.62px;top:3.80px;font-size:14px;line-height:14px;transform:scaleX(1.2395);color:#fff;font-weight:bold;">1494)</span>
<span class="t" style="left:11.00px;top:28.00px;font-size:12px;line-height:12px;transform:scaleX(1.0773);color:#000;font-weight:bold;">Договор</span>
<span class="t" style="left:78.00px;top:28.00px;font-size:12px;line-height:12px;transform:scaleX(1.0538);color:#000;font-weight:bold;">Модули</span>
<span class="t" style="left:141.00px;top:28.00px;font-size:12px;line-height:12px;transform:scaleX(1.0427);color:#000;font-weight:bold;">Плагины</span>
<span class="t" style="left:211.00px;top:28.00px;font-size:12px;line-height:12px;transform:scaleX(1.0553);color:#000;font-weight:bold;">Справочники</span>
<span class="t" style="left:308.00px;top:28.00px;font-size:12px;line-height:12px;transform:scaleX(0.9972);color:#000;font-weight:bold;">Сервис</span>
<span class="t" style="left:364.00px;top:28.00px;font-size:12px;line-height:12px;transform:scaleX(1.0313);color:#000;font-weight:bold;">Утилиты</span>
<span class="t" style="left:431.50px;top:28.00px;font-size:12px;line-height:12px;transform:scaleX(1.0420);color:#000;font-weight:bold;">Справка</span>
<span class="t" style="left:425.00px;top:55.00px;font-size:12px;line-height:12px;transform:scaleX(0.8521);color:#000;font-weight:bold;">БД:</span>
<span class="t" style="left:453.00px;top:55.00px;font-size:12px;line-height:12px;transform:scaleX(1.0509);color:#000;font-weight:bold;">local_artur</span>
<span class="t" style="left:607.00px;top:56.00px;font-size:12px;line-height:12px;transform:scaleX(1.1000);color:#000;font-weight:bold;">Логин: artur</span>
<span class="t" style="left:726.50px;top:56.00px;font-size:12px;line-height:12px;transform:scaleX(1.1246);color:#000;font-weight:bold;">29 Май 11:51</span>
<span class="t" style="left:458.50px;top:89.00px;font-size:12px;line-height:12px;transform:scaleX(1.0593);color:#000;font-weight:bold;">Документы</span>
<span class="t" style="left:410.00px;top:89.00px;font-size:12px;line-height:12px;transform:scaleX(0.9680);color:#000;font-weight:bold;">CRM</span>
<span class="t" style="left:330.00px;top:89.00px;font-size:12px;line-height:12px;transform:scaleX(0.9810);color:#000;font-weight:bold;">Рассылки</span>
<span class="t" style="left:248.30px;top:89.00px;font-size:12px;line-height:12px;transform:scaleX(1.0831);color:#000;font-weight:bold;">HelpDesk</span>
<span class="t" style="left:169.60px;top:89.00px;font-size:12px;line-height:12px;transform:scaleX(1.0648);color:#000;font-weight:bold;">Карточки</span>
<span class="t" style="left:111.70px;top:89.00px;font-size:12px;line-height:12px;transform:scaleX(1.0253);color:#000;font-weight:bold;">Отчет</span>
<span class="t" style="left:20.40px;top:89.00px;font-size:12px;line-height:12px;transform:scaleX(1.0261);color:#000;font-weight:bold;">Параметры</span>
<span class="t" style="left:21.00px;top:108.40px;font-size:12px;line-height:12px;transform:scaleX(1.0773);color:#000;font-weight:bold;">Договор</span>
<span class="t" style="left:37.00px;top:130.80px;font-size:14px;line-height:14px;transform:scaleX(1.1577);color:#000;font-weight:bold;">artur_test [ Гареев Артур Маратович ]</span>
<span class="t" style="left:488.00px;top:132.00px;font-size:12px;line-height:12px;transform:scaleX(1.1825);color:#1a1a1a;">352984</span>
<span class="t" style="left:566.00px;top:108.40px;font-size:12px;line-height:12px;transform:scaleX(1.0592);color:#000;font-weight:bold;">Период</span>
<span class="t" style="left:564.00px;top:131.50px;font-size:12px;line-height:12px;transform:scaleX(1.0566);color:#000;font-weight:bold;">с</span>
<span class="t" style="left:590.00px;top:131.50px;font-size:12px;line-height:12px;transform:scaleX(1.1537);color:#000;font-weight:bold;">24.11.2009</span>
<span class="t" style="left:680.00px;top:131.50px;font-size:12px;line-height:12px;transform:scaleX(0.9778);color:#000;font-weight:bold;">по</span>
<span class="t" style="left:29.00px;top:181.75px;font-size:12.5px;line-height:12.5px;transform:scaleX(1.0455);color:#000;">Параметры договора</span>
<span class="t" style="left:29.00px;top:199.75px;font-size:12.5px;line-height:12.5px;transform:scaleX(1.0364);color:#000;">Объекты договора</span>
<span class="t" style="left:210.80px;top:199.75px;font-size:12.5px;line-height:12.5px;transform:scaleX(1.2201);color:#000;">0/0</span>
<span class="t" style="left:29.00px;top:217.75px;font-size:12.5px;line-height:12.5px;transform:scaleX(1.0441);color:#000;">Иерархия договоров</span>
<span class="t" style="left:210.80px;top:217.75px;font-size:12.5px;line-height:12.5px;transform:scaleX(1.1304);color:#000;">супер: 1/1</span>
<span class="t" style="left:29.00px;top:235.75px;font-size:12.5px;line-height:12.5px;transform:scaleX(0.9620);color:#000;">Статус</span>
<span class="t" style="left:210.80px;top:235.75px;font-size:12.5px;line-height:12.5px;transform:scaleX(1.0350);color:#000;">Отключен</span>
<span class="t" style="left:29.00px;top:253.75px;font-size:12.5px;line-height:12.5px;transform:scaleX(1.0219);color:#000;">Лимит</span>
<span class="t" style="left:211.40px;top:253.75px;font-size:12.5px;line-height:12.5px;transform:scaleX(1.1565);color:#000;">-2050.00</span>
<span class="t" style="left:29.00px;top:271.75px;font-size:12.5px;line-height:12.5px;transform:scaleX(1.0156);color:#000;">Режим</span>
<span class="t" style="left:210.80px;top:271.75px;font-size:12.5px;line-height:12.5px;transform:scaleX(1.1118);color:#000;">кредит</span>
<span class="t" style="left:29.00px;top:289.75px;font-size:12.5px;line-height:12.5px;transform:scaleX(1.0541);color:#000;">Лицо</span>
<span class="t" style="left:210.80px;top:289.75px;font-size:12.5px;line-height:12.5px;transform:scaleX(1.0048);color:#000;">Физическое</span>
<span class="t" style="left:29.00px;top:307.75px;font-size:12.5px;line-height:12.5px;transform:scaleX(1.0384);color:#000;">Баланс (январь 2012)</span>
<span class="t" style="left:48.70px;top:325.75px;font-size:12.5px;line-height:12.5px;transform:scaleX(1.0407);color:#000;">Входящий остаток</span>
<span class="t" style="left:211.40px;top:325.75px;font-size:12.5px;line-height:12.5px;transform:scaleX(1.2012);color:#000;">-315.70</span>
<span class="t" style="left:48.70px;top:343.75px;font-size:12.5px;line-height:12.5px;transform:scaleX(1.0628);color:#000;">Приход</span>
<span class="t" style="left:210.80px;top:343.75px;font-size:12.5px;line-height:12.5px;transform:scaleX(1.1556);color:#000;">703.00</span>
<span class="t" style="left:48.70px;top:361.75px;font-size:12.5px;line-height:12.5px;transform:scaleX(1.0479);color:#000;">Наработка</span>
<span class="t" style="left:210.80px;top:361.75px;font-size:12.5px;line-height:12.5px;transform:scaleX(1.1405);color:#000;">0.00</span>
<span class="t" style="left:48.70px;top:379.75px;font-size:12.5px;line-height:12.5px;transform:scaleX(1.0012);color:#000;">Расход</span>
<span class="t" style="left:210.80px;top:379.75px;font-size:12.5px;line-height:12.5px;transform:scaleX(1.1556);color:#000;">889.00</span>
<span class="t" style="left:48.70px;top:397.75px;font-size:12.5px;line-height:12.5px;transform:scaleX(1.0408);color:#000;">Исходящий остаток</span>
<span class="t" style="left:211.40px;top:397.75px;font-size:12.5px;line-height:12.5px;transform:scaleX(1.2012);color:#000;">-501.70</span>
<span class="t" style="left:29.00px;top:415.75px;font-size:12.5px;line-height:12.5px;transform:scaleX(1.0404);color:#000;">Тарифные планы</span>
<span class="t" style="left:29.00px;top:433.75px;font-size:12.5px;line-height:12.5px;transform:scaleX(1.0123);color:#000;">Модули</span>
<span class="t" style="left:48.70px;top:451.75px;font-size:12.5px;line-height:12.5px;transform:scaleX(0.9507);color:#000;">BVCom</span>
<span class="t" style="left:48.70px;top:469.75px;font-size:12.5px;line-height:12.5px;transform:scaleX(0.8982);color:#000;">INET</span>
<span class="t" style="left:48.70px;top:487.75px;font-size:12.5px;line-height:12.5px;transform:scaleX(0.9814);color:#000;">Qiwi</span>
<span class="t" style="left:48.70px;top:505.75px;font-size:12.5px;line-height:12.5px;transform:scaleX(0.8463);color:#000;">RSCM</span>
<span class="t" style="left:48.00px;top:523.75px;font-size:12.5px;line-height:12.5px;transform:scaleX(1.0354);color:#000;">Softkey</span>
<div style="left:9px;top:178px;width:280px;height:374px;overflow:hidden;"><span class="t" style="left:39.70px;top:363.75px;font-size:12.5px;line-height:12.5px;transform:scaleX(1.0367);color:#000;">Бухгалтерия</span></div>
<span class="t" style="left:31.20px;top:557.60px;font-size:12px;line-height:12px;transform:scaleX(1.0009);color:#000;font-weight:bold;">Скрытый</span>
<span class="t" style="left:334.20px;top:170.60px;font-size:12px;line-height:12px;transform:scaleX(1.0123);color:#000;font-weight:bold;">Фильтр</span>
<span class="t" style="left:322.40px;top:199.80px;font-size:12px;line-height:12px;transform:scaleX(1.0408);color:#000;font-weight:bold;">Платежи за п...</span>
<span class="t" style="left:440.00px;top:199.70px;font-size:12px;line-height:12px;transform:scaleX(1.1317);color:#000;font-weight:bold;">02.04.2012</span>
<span class="t" style="left:538.50px;top:199.70px;font-size:12px;line-height:12px;transform:scaleX(0.9915);color:#000;font-weight:bold;">по</span>
<span class="t" style="left:584.00px;top:199.70px;font-size:12px;line-height:12px;transform:scaleX(1.1333);color:#000;font-weight:bold;">31.05.2012</span>
<span class="t" style="left:679.00px;top:199.70px;font-size:12px;line-height:12px;transform:scaleX(0.9827);color:#000;font-weight:bold;">Статус</span>
<div style="left:730px;top:195px;width:75px;height:21px;overflow:hidden;"><span class="t" style="left:5.00px;top:4.20px;font-size:12px;line-height:12px;transform:scaleX(1.0116);color:#000;font-weight:bold;">Оплаченные</span></div>
<span class="t" style="left:325.70px;top:235.55px;font-size:12.5px;line-height:12.5px;transform:scaleX(0.8240);color:#000;">ID</span>
<span class="t" style="left:377.00px;top:235.55px;font-size:12.5px;line-height:12.5px;transform:scaleX(1.0549);color:#000;">Дата платежа</span>
<span class="t" style="left:550.50px;top:235.55px;font-size:12.5px;line-height:12.5px;transform:scaleX(0.9727);color:#000;">Сумма</span>
<span class="t" style="left:699.60px;top:235.55px;font-size:12.5px;line-height:12.5px;transform:scaleX(0.9468);color:#000;">Статус</span>
<span class="t" style="left:320.40px;top:250.75px;font-size:12.5px;line-height:12.5px;transform:scaleX(1.0162);color:#000;">13</span>
<span class="t" style="left:346.40px;top:250.75px;font-size:12.5px;line-height:12.5px;transform:scaleX(1.0976);color:#000;">17.04.2012</span>
<span class="t" style="left:422.70px;top:250.75px;font-size:12.5px;line-height:12.5px;transform:scaleX(1.0797);color:#000;">15:36:12</span>
<span class="t" style="left:495.60px;top:250.75px;font-size:12.5px;line-height:12.5px;transform:scaleX(1.0790);color:#000;">0.01</span>
<span class="t" style="left:645.70px;top:250.75px;font-size:12.5px;line-height:12.5px;transform:scaleX(0.9848);color:#000;">Оплачен</span>
<span class="t" style="left:458.70px;top:552.00px;font-size:12px;line-height:12px;transform:scaleX(1.0607);color:#000;font-weight:bold;">Всего платежей: 1 на сумму: 0.01</span>
<span class="t" style="left:31.20px;top:584.00px;font-size:12px;line-height:12px;transform:scaleX(1.0592);color:#000;font-weight:bold;">Поиск договоров</span>
<span class="t" style="left:177.60px;top:585.75px;font-size:12.5px;line-height:12.5px;transform:scaleX(1.0308);color:#000;font-weight:bold;">artur_test</span>
</div>
</body></html>
